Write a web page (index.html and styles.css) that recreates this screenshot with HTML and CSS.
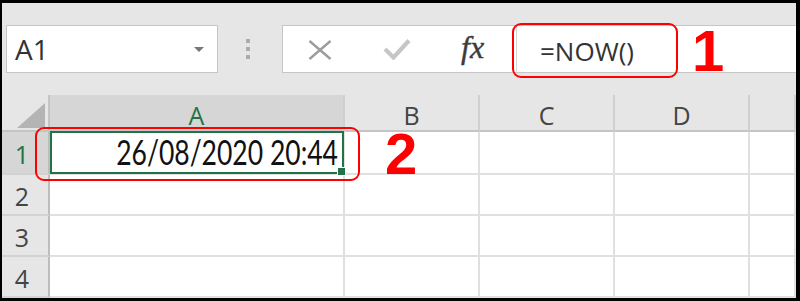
FILE: index.html
```html
<!DOCTYPE html>
<html>
<head>
<meta charset="utf-8">
<link rel="stylesheet" href="styles.css">
</head>
<body>
<div class="frame">
  <div class="toolbar">
    <div class="namebox"><span class="nb-text">A1</span><span class="caret"></span></div>
    <div class="grip"><i></i><i></i><i></i></div>
    <div class="fbar">
      <div class="fbtns">
        <svg class="ic-x" width="24" height="20" viewBox="0 0 24 20"><path d="M1.5 1 L22.5 19 M22.5 1 L1.5 19" stroke="#9c9c9c" stroke-width="2.4" fill="none"/></svg>
        <svg class="ic-check" width="28" height="22" viewBox="0 0 28 22"><path d="M2 11 L10.5 19.5 L26 2.5" stroke="#c6c6c6" stroke-width="4.2" fill="none" stroke-linejoin="miter"/></svg>
        <span class="fx">fx</span>
      </div>
      <div class="finput">=NOW()</div>
    </div>
  </div>
  <div class="sheet">
    <div class="corner"><span class="tri"></span></div>
    <div class="colhead sel">A</div>
    <div class="colhead">B</div>
    <div class="colhead">C</div>
    <div class="colhead">D</div>
    <div class="colhead"></div>

    <div class="rowhead sel">1</div>
    <div class="cell active"><span class="val">26/08/2020 20:44</span><span class="handle"></span></div>
    <div class="cell"></div><div class="cell"></div><div class="cell"></div><div class="cell"></div>

    <div class="rowhead">2</div>
    <div class="cell"></div><div class="cell"></div><div class="cell"></div><div class="cell"></div><div class="cell"></div>

    <div class="rowhead">3</div>
    <div class="cell"></div><div class="cell"></div><div class="cell"></div><div class="cell"></div><div class="cell"></div>

    <div class="rowhead">4</div>
    <div class="cell"></div><div class="cell"></div><div class="cell"></div><div class="cell"></div><div class="cell"></div>
  </div>
  <div class="mark mark1"></div>
  <div class="num num1">1</div>
  <div class="mark mark2"></div>
  <div class="num num2">2</div>
</div>
</body>
</html>
```

FILE: styles.css
```css
html, body {
  margin: 0;
  padding: 0;
  background: #fff;
}

.frame {
  position: relative;
  width: 800px;
  height: 301px;
  box-sizing: border-box;
  border-style: solid;
  border-color: #000;
  border-width: 3px 4px 3px 2px;
  background: #e6e6e6;
  overflow: hidden;
  font-family: "Open Sans", "Noto Sans", sans-serif;
}

/* ---------- toolbar ---------- */
.toolbar {
  display: flex;
  height: 48px;
  margin-top: 22px;
  padding-left: 4px;
}

.namebox {
  width: 212px;
  box-sizing: border-box;
  border: 1px solid #c6c6c6;
  background: #fff;
  display: flex;
  align-items: center;
  padding-left: 8px;
  padding-right: 13px;
  font-size: 28px;
  color: #333;
}

.nb-text {
  flex: 1;
}

.caret {
  width: 0;
  height: 0;
  border-left: 5px solid transparent;
  border-right: 5px solid transparent;
  border-top: 5px solid #777;
}

.grip {
  width: 64px;
  box-sizing: border-box;
  padding-right: 4px;
  display: flex;
  flex-direction: column;
  align-items: center;
  justify-content: center;
  gap: 4px;
}

.grip i {
  display: block;
  width: 4px;
  height: 4px;
  background: #ababab;
}

.fbar {
  flex: 1;
  display: flex;
  background: #fff;
  border: 1px solid #c6c6c6;
  border-right: none;
}

.fbtns {
  width: 234px;
  box-sizing: border-box;
  display: flex;
  align-items: center;
  padding-left: 25px;
  border-right: 1px solid #d6d6d6;
}

.ic-x {
  display: block;
  margin-top: 1px;
}

.ic-check {
  display: block;
  margin-left: 51px;
}

.fx {
  margin-left: 50px;
  font-family: "Liberation Serif", "DejaVu Serif", serif;
  font-style: italic;
  font-size: 32px;
  color: #3c3c3c;
  line-height: 1;
  margin-top: -4px;
  -webkit-text-stroke: 0.4px #3c3c3c;
}

.finput {
  display: flex;
  align-items: center;
  padding-left: 23px;
  padding-top: 3px;
  font-size: 26px;
  color: #333;
}

/* ---------- sheet ---------- */
.sheet {
  margin-top: 22px;
  display: grid;
  grid-template-columns: 48px 295px 135px 135px 135px 46px;
  grid-template-rows: 37px 43px 41px 41px 41px;
}

.corner {
  position: relative;
  background: #e6e6e6;
  border-right: 2px solid #c4c4c4;
  border-bottom: 2px solid #c4c4c4;
  box-sizing: border-box;
}

.tri {
  position: absolute;
  right: 3px;
  bottom: 2px;
  width: 28px;
  height: 25px;
  background: #b4b4b4;
  clip-path: polygon(100% 0, 100% 100%, 0 100%);
}

.colhead {
  background: #e6e6e6;
  border-right: 2px solid #d0d0d0;
  border-bottom: 2px solid #c4c4c4;
  box-sizing: border-box;
  text-align: center;
  font-size: 25px;
  color: #444;
  padding-top: 4px;
  line-height: 32px;
}

.colhead.sel {
  background: #d6d6d6;
  color: #217346;
}

.rowhead {
  background: #e6e6e6;
  border-right: 2px solid #bdbdbd;
  border-bottom: 2px solid #d2d2d2;
  box-sizing: border-box;
  display: flex;
  align-items: center;
  justify-content: center;
  padding-right: 6px;
  padding-top: 2px;
  font-size: 25px;
  color: #444;
}

.rowhead.sel {
  background: #d6d6d6;
  color: #217346;
}

.cell {
  background: #fff;
  border-right: 2px solid #e0e0e0;
  border-bottom: 2px solid #e0e0e0;
  box-sizing: border-box;
}

.cell.active {
  position: relative;
  display: flex;
  align-items: center;
  justify-content: flex-end;
  padding-right: 5px;
  font-family: "Lato", "Open Sans", sans-serif;
  font-size: 26.5px;
  color: #111;
  white-space: nowrap;
}

.val {
  display: inline-block;
  transform: scaleY(1.28);
  transform-origin: center;
  line-height: 1;
  margin-top: -1px;
}

.cell.active::after {
  content: "";
  position: absolute;
  left: 0;
  top: -1px;
  right: -1px;
  bottom: -1px;
  border: 2px solid #217346;
}

.handle {
  position: absolute;
  right: -3px;
  bottom: -3px;
  width: 7px;
  height: 7px;
  background: #217346;
  border: 1px solid #fff;
  z-index: 2;
}

/* ---------- annotations ---------- */
.mark {
  position: absolute;
  box-sizing: border-box;
  border: 2px solid #f00;
  border-radius: 9px;
}

.mark1 {
  left: 510px;
  top: 20px;
  width: 166px;
  height: 55px;
}

.mark2 {
  left: 33px;
  top: 124px;
  width: 325px;
  height: 54px;
}

.num {
  position: absolute;
  color: #f00;
  font-family: "Liberation Sans", Arial, sans-serif;
  font-weight: bold;
  font-size: 58px;
  line-height: 0.72;
}

.num1 {
  left: 690px;
  top: 27px;
}

.num2 {
  left: 383px;
  top: 130px;
}
```
